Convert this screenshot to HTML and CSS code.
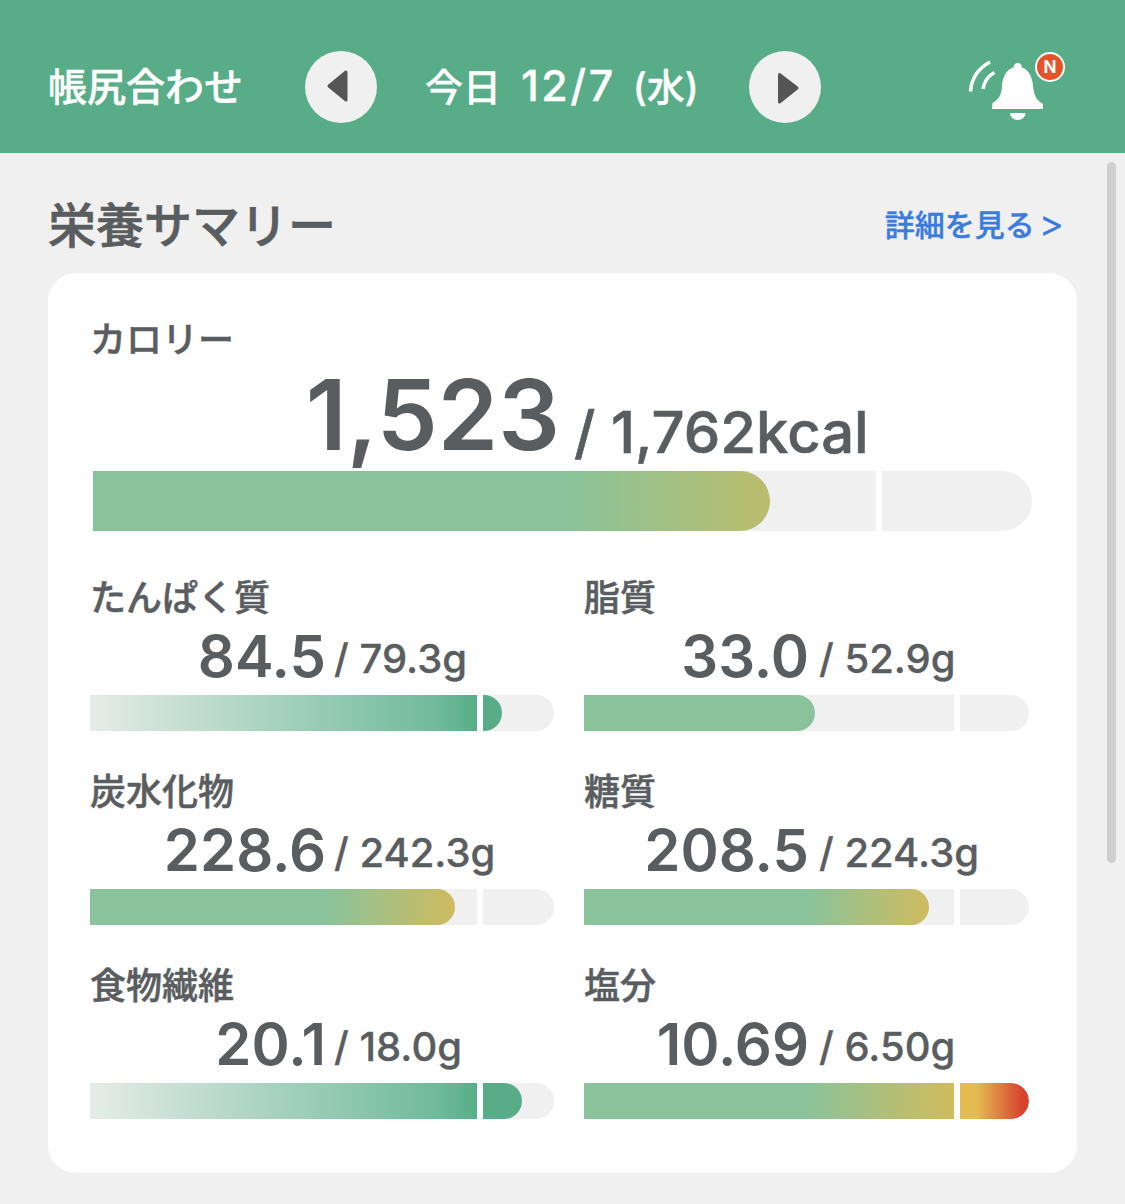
FILE: index.html
```html
<!DOCTYPE html>
<html lang="ja">
  <head>
    <meta charset="UTF-8" />
    <title>栄養サマリー</title>
    <link rel="stylesheet" href="styles.css">
  </head>
  <body>
    <div class="header">
      <div class="title">帳尻合わせ</div>
      <div class="round-btn">
        <svg width="72" height="72" viewBox="0 0 72 72"><path class="arrow" d="M41 21 L24 35 L41 49 Z" /></svg>
      </div>
      <div class="date">今日<span class="date-num">12/7</span>(水)</div>
      <div class="round-btn">
        <svg width="72" height="72" viewBox="0 0 72 72"><path class="arrow" d="M30.500 23.500 L48 37 L30.500 51 Z" /></svg>
      </div>
      <div class="bell">
        <svg width="110" height="75" viewBox="960 50 110 75">
          <path class="wave" d="M970.500 91.500 C971.500 78 979 68 990 62" />
          <path class="wave" d="M983 89 C984 82 988 76 994.500 72.500" />
          <path class="bell-body" d="M1018 63 c-2.600 0-4.400 1.900-4.400 4.200 C1006 70 1002.500 77 1002 86 c-.5 8-2.500 13-9.500 17 l-.5 6 h51 v-5 c-7-4-9-9-10-18 c-.6-9-4-16-11.200-18.800 C1022 65 1020.500 63 1018 63 Z" />
          <path class="bell-body" d="M1010 113 h15.500 a7.750 7 0 0 1 -15.500 0 Z" />
        </svg>
        <span class="badge">N</span>
      </div>
    </div>

    <div class="content">
      <div class="section-head">
        <div class="section-title">栄養サマリー</div>
        <a class="more" href="#">詳細を見る<span class="more-arrow">&gt;</span></a>
      </div>

      <div class="card">
        <div class="calorie">
          <div class="label label-big">カロリー</div>
          <div class="value value-big">
            <span class="num">1,523</span>
            <span class="goal">/ 1,762kcal</span>
          </div>
          <div class="bar bar-big">
            <div class="seg seg-main"><div class="fill fill-warn-soft" style="width: 86.4%"></div></div>
            <div class="seg seg-end"></div>
          </div>
        </div>

        <div class="grid">
          <div class="item">
            <div class="label">たんぱく質</div>
            <div class="value">
              <span class="num">84.5</span>
              <span class="goal">/ 79.3g</span>
            </div>
            <div class="bar">
              <div class="seg seg-main"><div class="fill fill-over" style="width: 100%"></div></div>
              <div class="seg seg-end"><div class="fill fill-solid" style="width: 27%"></div></div>
            </div>
          </div>

          <div class="item">
            <div class="label">脂質</div>
            <div class="value">
              <span class="num">33.0</span>
              <span class="goal">/ 52.9g</span>
            </div>
            <div class="bar">
              <div class="seg seg-main"><div class="fill fill-green" style="width: 62.400%"></div></div>
              <div class="seg seg-end"></div>
            </div>
          </div>

          <div class="item">
            <div class="label">炭水化物</div>
            <div class="value">
              <span class="num">228.6</span>
              <span class="goal">/ 242.3g</span>
            </div>
            <div class="bar">
              <div class="seg seg-main"><div class="fill fill-warn" style="width: 94.300%"></div></div>
              <div class="seg seg-end"></div>
            </div>
          </div>

          <div class="item">
            <div class="label">糖質</div>
            <div class="value">
              <span class="num">208.5</span>
              <span class="goal">/ 224.3g</span>
            </div>
            <div class="bar">
              <div class="seg seg-main"><div class="fill fill-warn" style="width: 93.200%"></div></div>
              <div class="seg seg-end"></div>
            </div>
          </div>

          <div class="item">
            <div class="label">食物繊維</div>
            <div class="value">
              <span class="num">20.1</span>
              <span class="goal">/ 18.0g</span>
            </div>
            <div class="bar">
              <div class="seg seg-main"><div class="fill fill-over" style="width: 100%"></div></div>
              <div class="seg seg-end"><div class="fill fill-solid" style="width: 55%"></div></div>
            </div>
          </div>

          <div class="item">
            <div class="label">塩分</div>
            <div class="value">
              <span class="num">10.69</span>
              <span class="goal">/ 6.50g</span>
            </div>
            <div class="bar">
              <div class="seg seg-main"><div class="fill fill-warn-full" style="width: 100%"></div></div>
              <div class="seg seg-end"><div class="fill fill-danger" style="width: 100%"></div></div>
            </div>
          </div>
        </div>
      </div>
    </div>

    <div class="scrollbar"></div>
  </body>
</html>
```

FILE: styles.css
```css
body {
  margin: 0;
  height: 1204px;
  overflow: hidden;
  background-color: #f0f0f0;
  color: #5a5d5f;
  font-family: Inter, "Noto Sans CJK JP", sans-serif;
}

/* Header */
.header {
  display: flex;
  align-items: center;
  height: 132px;
  padding: 21px 0 0 48px;
  background-color: #58ad88;
  color: #fff;
}

.title {
  width: 257px;
  margin-bottom: 6px;
  font-size: 39px;
  font-weight: 500;
  -webkit-text-stroke: 0.400px #fff;
}

.round-btn {
  width: 72px;
  height: 72px;
  border-radius: 50%;
  background-color: #f0f0f0;
}

.round-btn svg {
  display: block;
}

.arrow {
  fill: #555;
  stroke: #555;
  stroke-width: 3;
  stroke-linejoin: round;
}

.date {
  width: 276px;
  margin: 0 48px 6px;
  font-size: 38px;
  font-weight: 500;
  white-space: nowrap;
  -webkit-text-stroke: 0.300px #fff;
}

.date-num {
  margin: 0 17px 0 20px;
  font-size: 43px;
  letter-spacing: 2.500px;
}

.bell {
  position: relative;
  width: 110px;
  height: 75px;
  margin-left: 139px;
}

.bell svg {
  display: block;
}

.wave {
  fill: none;
  stroke: #fff;
  stroke-width: 3.500;
}

.bell-body {
  fill: #fff;
}

.badge {
  position: absolute;
  top: 2px;
  left: 75px;
  width: 26px;
  height: 26px;
  border: 2px solid #fff;
  border-radius: 50%;
  background-color: #e5532b;
  color: #fff;
  font-size: 17px;
  font-weight: bold;
  line-height: 26px;
  text-align: center;
}

/* Section */
.content {
  padding: 42px 0 0 48px;
  width: 1029px;
}

.section-head {
  display: flex;
  justify-content: space-between;
  align-items: center;
  height: 60px;
  margin-bottom: 18px;
}

.section-title {
  margin-bottom: 6px;
  font-size: 48px;
  font-weight: 500;
  white-space: nowrap;
  -webkit-text-stroke: 0.700px #5a5d5f;
}

.more {
  display: flex;
  align-items: center;
  margin: 0 13px 4px 0;
  color: #3a7bdc;
  font-size: 30px;
  font-weight: 500;
  text-decoration: none;
  white-space: nowrap;
  -webkit-text-stroke: 0.400px #3a7bdc;
}

.more-arrow {
  margin-left: 4px;
  font-size: 38px;
  font-weight: 400;
  line-height: 30px;
  -webkit-text-stroke: 0;
}

/* Card */
.card {
  height: 900px;
  box-sizing: border-box;
  padding: 42px 45px 0 42px;
  background-color: #fff;
  border-radius: 28px;
}

.label {
  height: 42px;
  font-size: 36px;
  font-weight: 500;
  line-height: 42px;
  white-space: nowrap;
  -webkit-text-stroke: 0.500px #5a5d5f;
}

.label-big {
  height: 50px;
  line-height: 50px;
}

.value {
  display: flex;
  align-items: flex-start;
  height: 76px;
  font-weight: 600;
  white-space: nowrap;
}

.value .num {
  flex: 0 0 236px;
  font-size: 58px;
  line-height: 74px;
  text-align: right;
}

.item:nth-child(even) .num {
  flex-basis: 225px;
}

.value .goal {
  margin-left: 8px;
  font-size: 40px;
  font-weight: 500;
  line-height: 79px;
  -webkit-text-stroke: 0.300px #5a5d5f;
}

.item:nth-child(even) .goal {
  margin-left: 10px;
}

.value-big {
  height: 106px;
  margin-left: 3px;
}

.value-big .num {
  flex: 0 0 467px;
  font-size: 97px;
  line-height: 99px;
}

.value-big .goal {
  margin-left: 14px;
  font-size: 58px;
  line-height: 134px;
  -webkit-text-stroke: 0.600px #5a5d5f;
}

/* Bars */
.bar {
  display: flex;
  gap: 6px;
  height: 36px;
}

.bar-big {
  height: 60px;
  margin-left: 3px;
}

.seg {
  overflow: hidden;
  background-color: #f0f0f0;
}

.seg-main {
  flex: 1;
}

.seg-end {
  flex: 0 0 71px;
  border-radius: 0 18px 18px 0;
}

.item:nth-child(even) .seg-end {
  flex-basis: 69px;
}

.bar-big .seg-end {
  flex-basis: 150px;
  border-radius: 0 30px 30px 0;
}

.fill {
  height: 100%;
  border-radius: 0 18px 18px 0;
}

.bar-big .fill {
  border-radius: 0 30px 30px 0;
}

.seg-main .fill-over,
.seg-main .fill-warn-full {
  border-radius: 0;
}

.fill-green {
  background-color: #8ac39b;
}

.fill-solid {
  background-color: #58ad88;
}

.fill-over {
  background: linear-gradient(90deg, #e6ece8, #6fba9a 90%, #58ad88);
}

.fill-warn-soft {
  background: linear-gradient(90deg, #8ac39b 70%, #bbbd6c);
}

.fill-warn {
  background: linear-gradient(90deg, #8ac39b 65%, #cfbb5f);
}

.fill-warn-full {
  background: linear-gradient(90deg, #8ac39b 60%, #d0bb5d);
}

.fill-danger {
  background: linear-gradient(90deg, #e3bb50 25%, #d8432f 90%);
}

.grid {
  display: grid;
  grid-template-columns: 464px 445px;
  column-gap: 30px;
  row-gap: 40px;
  margin-top: 46px;
}

/* Scrollbar */
.scrollbar {
  position: absolute;
  top: 162px;
  left: 1107px;
  width: 9px;
  height: 701px;
  border-radius: 5px;
  background-color: #cfcfcf;
}
```
